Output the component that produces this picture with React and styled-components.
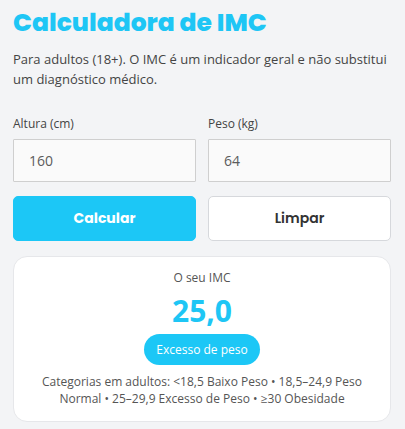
import React, { useState } from 'react';
import styled, { createGlobalStyle } from 'styled-components';

const GlobalStyle = createGlobalStyle`
  html, body {
    margin: 0;
    padding: 0;
    background: #f3f4f6;
  }
  body {
    font-family: "Open Sans", "Liberation Sans", sans-serif;
    color: #444;
  }
  * { box-sizing: border-box; }
`;

const Page = styled.main`
  padding: 7px 14px 8px 13px;
`;

const Title = styled.h1`
  margin: 0;
  font-family: "Poppins", Inter, "Open Sans", sans-serif;
  font-weight: 800;
  font-size: 25px;
  line-height: 31px;
  color: #1ec6f5;
`;

const Intro = styled.p`
  margin: 11px 0 0;
  font-size: 13px;
  line-height: 20px;
  color: #444;
`;

const Fields = styled.div`
  display: grid;
  grid-template-columns: 1fr 1fr;
  gap: 12px;
  margin-top: 26px;
`;

const Field = styled.label`
  display: flex;
  flex-direction: column;
  gap: 6px;
  min-width: 0;
  font-size: 12px;
  line-height: 18px;
  color: #444;
`;

const Input = styled.input`
  width: 100%;
  min-width: 0;
  height: 43px;
  padding: 0 15px;
  border: 1px solid #cfcfcf;
  border-radius: 1px;
  background: #fafafa;
  font-family: "Open Sans", sans-serif;
  font-size: 14px;
  color: #5c5c5c;
  outline: none;
`;

const Actions = styled.div`
  display: grid;
  grid-template-columns: 1fr 1fr;
  gap: 12px;
  margin-top: 14px;
`;

const Button = styled.button`
  height: 45px;
  border-radius: 5px;
  font-family: "Poppins", Inter, sans-serif;
  font-size: 14px;
  font-weight: ${p => (p.$primary ? 700 : 600)};
  cursor: pointer;
  border: 1px solid ${p => (p.$primary ? '#1cc7f6' : '#d6d8dc')};
  background: ${p => (p.$primary ? '#1cc7f6' : '#fff')};
  color: ${p => (p.$primary ? '#fff' : '#333')};
`;

const ResultCard = styled.section`
  margin-top: 15px;
  padding: 12px 16px 14px;
  background: #fff;
  border: 1px solid #e6e7ea;
  border-radius: 14px;
  display: flex;
  flex-direction: column;
  align-items: center;
  text-align: center;
`;

const ResultLabel = styled.div`
  font-size: 12px;
  line-height: 18px;
  color: #555;
`;

const ResultValue = styled.div`
  margin-top: 4px;
  font-size: 30px;
  line-height: 40px;
  font-weight: 700;
  color: #1ec6f5;
`;

const Badge = styled.span`
  margin-top: 3px;
  padding: 7px 12px;
  border-radius: 999px;
  background: #1cc7f6;
  color: #fff;
  font-size: 12px;
  line-height: 17px;
`;

const Categories = styled.p`
  margin: 8px 0 0;
  font-size: 12px;
  line-height: 17px;
  color: #555;
`;

export default function App() {
  const [altura, setAltura] = useState('160');
  const [peso, setPeso] = useState('64');

  return (
    <>
      <GlobalStyle />
      <Page>
        <Title>Calculadora de IMC</Title>
        <Intro>
          Para adultos (18+). O IMC é um indicador geral e não substitui um diagnóstico médico.
        </Intro>
        <Fields>
          <Field>
            Altura (cm)
            <Input value={altura} onChange={e => setAltura(e.target.value)} />
          </Field>
          <Field>
            Peso (kg)
            <Input value={peso} onChange={e => setPeso(e.target.value)} />
          </Field>
        </Fields>
        <Actions>
          <Button $primary>Calcular</Button>
          <Button onClick={() => { setAltura(''); setPeso(''); }}>Limpar</Button>
        </Actions>
        <ResultCard>
          <ResultLabel>O seu IMC</ResultLabel>
          <ResultValue>25,0</ResultValue>
          <Badge>Excesso de peso</Badge>
          <Categories>
            Categorias em adultos: &lt;18,5 Baixo Peso • 18,5–24,9 Peso Normal • 25–29,9 Excesso de Peso • ≥30 Obesidade
          </Categories>
        </ResultCard>
      </Page>
    </>
  );
}
